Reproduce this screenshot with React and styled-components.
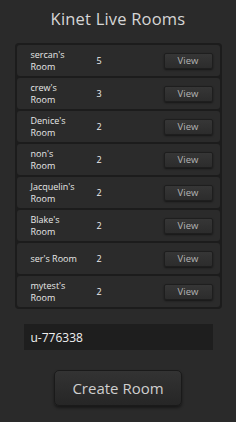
import React from 'react'
import styled, { createGlobalStyle } from 'styled-components'

const GlobalStyle = createGlobalStyle`
  html, body {
    margin: 0;
    padding: 0;
    background: #2a2a2a;
  }
  body {
    font-family: 'Open Sans', 'Liberation Sans', sans-serif;
  }
`

const rooms = [
  { id: 1, name: "sercan's Room", count: 5 },
  { id: 2, name: "crew's Room", count: 3 },
  { id: 3, name: "Denice's Room", count: 2 },
  { id: 4, name: "non's Room", count: 2 },
  { id: 5, name: "Jacquelin's Room", count: 2 },
  { id: 6, name: "Blake's Room", count: 2 },
  { id: 7, name: "ser's Room", count: 2 },
  { id: 8, name: "mytest's Room", count: 2 },
]

function RoomRow({ name, count }) {
  return (
    <Row>
      <Name>{name}</Name>
      <Count>{count}</Count>
      <ViewButton type="button">View</ViewButton>
    </Row>
  )
}

function App() {
  return (
    <Page>
      <GlobalStyle />
      <Title>Kinet Live Rooms</Title>
      <RoomList>
        {rooms.map((room) => (
          <RoomRow key={room.id} name={room.name} count={room.count} />
        ))}
      </RoomList>
      <UserField defaultValue="u-776338" />
      <CreateButton type="button">Create Room</CreateButton>
    </Page>
  )
}

const Page = styled.main`
  width: 236px;
  height: 422px;
  box-sizing: border-box;
  padding-top: 6px;
  display: flex;
  flex-direction: column;
  align-items: center;
  background: #2a2a2a;
`

const Title = styled.h1`
  margin: 0;
  height: 26px;
  line-height: 26px;
  font-size: 16.5px;
  font-weight: 400;
  color: #d6d6d6;
  letter-spacing: 0.2px;
`

const RoomList = styled.section`
  margin-top: 11px;
  width: 207px;
  box-sizing: border-box;
  padding: 2px;
  display: flex;
  flex-direction: column;
  gap: 2px;
  background: #1c1c1c;
  border-radius: 4px;
`

const Row = styled.article`
  height: 31px;
  box-sizing: border-box;
  padding: 0 7px 0 14px;
  display: grid;
  grid-template-columns: 48px 1fr 49px;
  column-gap: 18px;
  align-items: center;
  background: #2b2b2b;
  border-radius: 3px;
`

const Name = styled.span`
  font-size: 9px;
  font-weight: 500;
  line-height: 12px;
  color: #e8e8e8;
  overflow-wrap: anywhere;
`

const Count = styled.span`
  font-size: 9px;
  font-weight: 500;
  color: #eeeeee;
`

const ViewButton = styled.button`
  width: 49px;
  height: 16px;
  padding: 0;
  border: 1px solid #1e1e1e;
  border-radius: 2px;
  background: linear-gradient(#363636, #2c2c2c);
  box-shadow: 0 1px 2px rgba(0, 0, 0, 0.5);
  color: #b4b4b4;
  font-family: inherit;
  font-size: 9.5px;
  cursor: pointer;
`

const UserField = styled.input`
  margin-top: 15px;
  width: 189px;
  height: 26px;
  box-sizing: border-box;
  padding: 0 7px;
  border: none;
  outline: none;
  background: #1e1e1e;
  color: #f0f0f0;
  font-family: inherit;
  font-size: 12px;
  font-weight: 500;
`

const CreateButton = styled.button`
  margin-top: 20px;
  width: 128px;
  height: 36px;
  border: 1px solid #1a1a1a;
  border-radius: 5px;
  background: linear-gradient(#333333, #262626);
  box-shadow: 0 2px 3px rgba(0, 0, 0, 0.45);
  color: #cfcfcf;
  font-family: inherit;
  font-size: 15px;
  cursor: pointer;
`

export default App
